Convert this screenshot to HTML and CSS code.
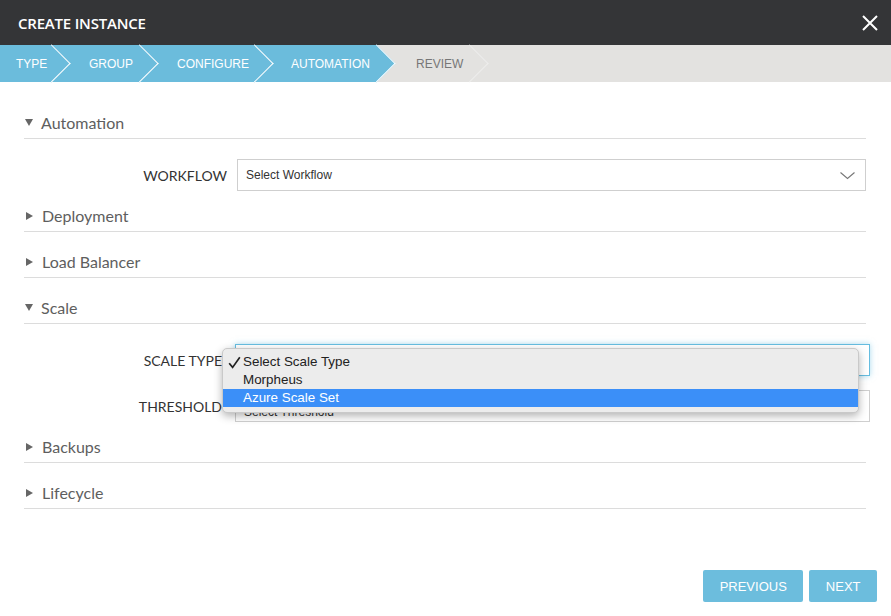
FILE: index.html
```html
<!DOCTYPE html>
<html>
<head>
<meta charset="utf-8">
<title>Create Instance</title>
<link rel="stylesheet" href="styles.css">
</head>
<body>
<div class="modal">
  <div class="modal-header">
    <div class="modal-title">CREATE INSTANCE</div>
    <svg class="close" width="16" height="16" viewBox="0 0 16 16"><path d="M1 1 L15 15 M15 1 L1 15" stroke="#fff" stroke-width="2" fill="none"/></svg>
  </div>
  <div class="wizard">
    <div class="step done s1"><span class="step-text">TYPE</span></div>
    <div class="step done s2"><span class="step-text">GROUP</span></div>
    <div class="step done s3"><span class="step-text">CONFIGURE</span></div>
    <div class="step done s4"><span class="step-text">AUTOMATION</span></div>
    <div class="step s5"><span class="step-text">REVIEW</span></div>
  </div>
  <div class="content">
    <div class="section open">
      <div class="section-header"><span class="tri tri-down"></span>Automation</div>
      <div class="section-body">
        <div class="form-row">
          <label class="form-label">WORKFLOW</label>
          <div class="select">
            <span>Select Workflow</span>
            <svg class="chev" width="15" height="8" viewBox="0 0 15 8"><path d="M0.5 0.5 L7.5 6.5 L14.5 0.5" stroke="#777" stroke-width="1.1" fill="none"/></svg>
          </div>
        </div>
      </div>
    </div>
    <div class="section">
      <div class="section-header"><span class="tri tri-right"></span>Deployment</div>
    </div>
    <div class="section">
      <div class="section-header"><span class="tri tri-right"></span>Load Balancer</div>
    </div>
    <div class="section open">
      <div class="section-header"><span class="tri tri-down"></span>Scale</div>
      <div class="section-body">
        <div class="form-row wide menu-anchor">
          <label class="form-label">SCALE TYPE</label>
          <div class="select focus"><span>Select Scale Type</span></div>
          <ul class="menu">
            <li class="menu-item checked"><svg class="check" width="13" height="13" viewBox="0 0 13 13"><path d="M1.2 7.2 L4.6 11.4 L11.8 1.2" stroke="#222" stroke-width="1.7" fill="none"/></svg>Select Scale Type</li>
            <li class="menu-item">Morpheus</li>
            <li class="menu-item active">Azure Scale Set</li>
          </ul>
        </div>
        <div class="form-row wide">
          <label class="form-label">THRESHOLD</label>
          <div class="select thr"><span>Select Threshold</span></div>
        </div>
      </div>
    </div>
    <div class="section">
      <div class="section-header"><span class="tri tri-right"></span>Backups</div>
    </div>
    <div class="section">
      <div class="section-header"><span class="tri tri-right"></span>Lifecycle</div>
    </div>
  </div>
  <div class="footer">
    <button class="btn">PREVIOUS</button>
    <button class="btn">NEXT</button>
  </div>
</div>
</body>
</html>
```

FILE: styles.css
```css
* { box-sizing: border-box; }
html, body { margin: 0; padding: 0; background: #fff; }
body { font-family: "Lato", "Liberation Sans", sans-serif; color: #333; }

.modal { display: flex; flex-direction: column; height: 616px; }

.modal-header {
  height: 45px;
  background: #343537;
  display: flex;
  align-items: center;
  justify-content: space-between;
  padding: 0 13px 0 18px;
  flex: none;
}
.modal-title {
  color: #fff;
  font-family: "Open Sans", "Liberation Sans", sans-serif;
  font-size: 15px;
  font-weight: 600;
  letter-spacing: -0.2px;
}
.close { display: block; }

.wizard {
  height: 37px;
  background: #e3e2e0;
  display: flex;
  flex: none;
}
.step {
  position: relative;
  height: 37px;
  line-height: 39px;
  font-family: "Liberation Sans", sans-serif;
  font-size: 12px;
  color: #777;
  padding-left: 37px;
  flex: none;
  white-space: nowrap;
}
.step-text { position: relative; z-index: 2; }
.step::after {
  content: "";
  position: absolute;
  z-index: 1;
  top: 5.42px;
  right: -13.08px;
  width: 26.16px;
  height: 26.16px;
  border-top: 1px solid #ededec;
  border-right: 1px solid #ededec;
  transform: rotate(45deg);
}
.step.done { background: #6bbcdc; color: #fff; }
.step.done::after { background: #6bbcdc; border-color: #fff; }
.s1 { width: 52px; padding-left: 16px; }
.s2 { width: 88px; }
.s3 { width: 115px; padding-left: 37px; }
.s4 { width: 122px; padding-left: 36px; }
.s5 { width: 93px; padding-left: 39px; }

.content { flex: 1; padding: 26px 25px 0 24px; }

.section + .section { margin-top: 15px; }
.section.open + .section { margin-top: 10px; }

.section-header {
  height: 31px;
  border-bottom: 1px solid #dcdcdc;
  display: flex;
  align-items: center;
  font-size: 16px;
  color: #5e5e5e;
  padding-bottom: 1px;
}
.tri { display: inline-block; width: 0; height: 0; }
.tri-down {
  margin-left: 1px;
  margin-right: 8px;
  border-left: 4.5px solid transparent;
  border-right: 4.5px solid transparent;
  border-top: 7px solid #666;
}
.tri-right {
  margin-left: 2px;
  margin-right: 9px;
  border-top: 4.5px solid transparent;
  border-bottom: 4.5px solid transparent;
  border-left: 7px solid #666;
}

.section-body { padding-top: 20px; display: flex; flex-direction: column; gap: 14px; }

.form-row { display: flex; align-items: center; }
.form-label {
  width: 203px;
  margin-right: 10px;
  text-align: right;
  font-size: 14px;
  color: #333;
  flex: none;
}
.form-row.wide { margin-right: -4px; }
.form-row.wide .form-label { width: 198px; margin-right: 13px; }

.select {
  flex: 1;
  height: 32px;
  border: 1px solid #cfcfcf;
  display: flex;
  align-items: center;
  justify-content: space-between;
  padding: 0 10px 0 8px;
  font-family: "Liberation Sans", sans-serif;
  font-size: 12px;
  color: #333;
  background: #fff;
}
.select.thr { align-items: flex-start; padding-top: 14px; }
.select .chev { display: block; margin-top: 1px; }
.select.focus {
  border-color: #66bde0;
  box-shadow: 0 0 6px rgba(102, 189, 224, 0.55);
}

.menu-anchor { position: relative; }
.menu {
  position: absolute;
  left: 198px;
  top: 4px;
  width: 637px;
  margin: 0;
  padding: 4px 0 5px;
  list-style: none;
  background: #ececec;
  border: 1px solid #c9c9c9;
  border-radius: 5px;
  box-shadow: 0 3px 9px rgba(0, 0, 0, 0.3);
  z-index: 10;
  font-family: "Liberation Sans", sans-serif;
  font-size: 13.4px;
  color: #222;
}
.menu-item {
  position: relative;
  height: 18px;
  line-height: 18px;
  padding-left: 20px;
}
.menu-item .check {
  position: absolute;
  left: 5px;
  top: 3px;
  display: block;
}
.menu-item.active { background: #3b8ff8; color: #fff; }

.footer {
  flex: none;
  display: flex;
  justify-content: flex-end;
  gap: 6px;
  padding: 0 14px 14px 0;
}
.btn {
  height: 32px;
  border: none;
  border-radius: 2px;
  background: #6cbddd;
  color: #fff;
  font-family: "Liberation Sans", sans-serif;
  font-size: 13px;
  padding: 0 16.5px;
}
```
